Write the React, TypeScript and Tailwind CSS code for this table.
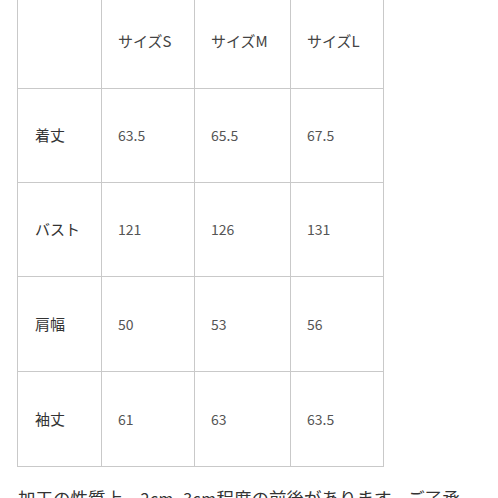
const HEADERS = ['サイズS', 'サイズM', 'サイズL']

const ROWS: Array<{ label: string; values: string[]; h: string }> = [
  { label: '着丈', values: ['63.5', '65.5', '67.5'], h: 'h-[94px]' },
  { label: 'バスト', values: ['121', '126', '131'], h: 'h-[94px]' },
  { label: '肩幅', values: ['50', '53', '56'], h: 'h-[95px]' },
  { label: '袖丈', values: ['61', '63', '63.5'], h: 'h-[95px]' },
]

const COLS = ['w-[84px]', 'w-[93px]', 'w-[96px]', 'w-[93px]']

export default function App() {
  return (
    <div
      className="h-[498px] w-[498px] overflow-hidden bg-white"
      style={{ fontFamily: '"Noto Sans CJK JP", "Noto Sans", sans-serif' }}
    >
      <div className="ml-[17px] mt-[-5px] flex w-fit flex-col border-l border-[#c9c9c9]">
        <div className="flex h-[94px]">
          <div className={`${COLS[0]} border-r border-b border-[#c9c9c9]`} />
          {HEADERS.map((h, i) => (
            <div
              key={h}
              className={`${COLS[i + 1]} flex items-center border-r border-b border-[#c9c9c9] pl-[16px] text-[15px] text-[#444]`}
            >
              {h}
            </div>
          ))}
        </div>
        {ROWS.map((r) => (
          <div key={r.label} className={`flex ${r.h}`}>
            <div
              className={`${COLS[0]} flex items-center border-r border-b border-[#c9c9c9] pl-[17px] text-[15px] text-[#333]`}
            >
              {r.label}
            </div>
            {r.values.map((v, i) => (
              <div
                key={i}
                className={`${COLS[i + 1]} flex items-center border-r border-b border-[#c9c9c9] pl-[16px] text-[14px] text-[#555]`}
              >
                {v}
              </div>
            ))}
          </div>
        ))}
      </div>
      <p className="ml-[18px] mt-[18px] w-[458px] text-[17.5px] leading-[26px] text-[#333]">
        加工の性質上、<span className="text-[16px] tracking-[0.5px]">2cm~3cm</span>程度の前後があります。ご了承ください。
      </p>
    </div>
  )
}
